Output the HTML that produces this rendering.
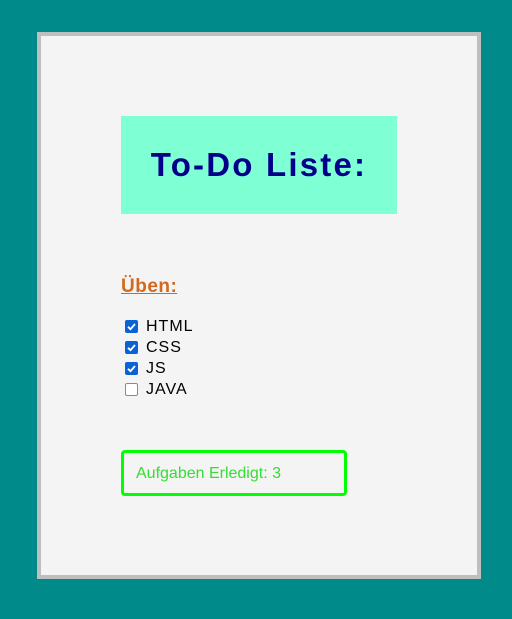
<!DOCTYPE html>
<html><head><meta charset="utf-8"><style>
html,body{margin:0;padding:0;}
body{width:512px;height:619px;background:#008b8a;position:relative;overflow:hidden;font-family:"Liberation Sans",sans-serif;}
.panel{position:absolute;left:37px;top:32px;width:436px;height:539px;background:#f4f4f4;border:4px solid #bfbfbf;}
.title{position:absolute;left:121px;top:116px;width:276px;height:98px;background:#7fffd4;color:#00008b;font-weight:bold;font-size:33px;line-height:98px;text-align:center;letter-spacing:2.2px;}
.ueben{position:absolute;left:121px;top:276px;color:#d2691e;font-size:19px;font-weight:bold;text-decoration:underline;letter-spacing:0.5px;}
.row{position:absolute;left:125px;height:14px;font-size:16px;color:#000;letter-spacing:1px;}
.cb{position:absolute;left:0;top:0;width:13px;height:13px;border-radius:2px;box-sizing:border-box;}
.on{background:#0b62d6;}
.off{border:1.5px solid #8a8a95;background:#fff;}
.row span{position:absolute;left:21px;top:-2px;white-space:nowrap;}
.done{position:absolute;left:121px;top:450px;height:40px;border:3px solid #00ff00;border-radius:4px;color:#33dd33;font-size:16px;line-height:42px;padding-left:12px;width:208px;}
</style></head><body>
<div class="panel"></div>
<div class="title">To-Do Liste:</div>
<div class="ueben">Üben:</div>
<div class="row" style="top:320px"><div class="cb on"><svg width="13" height="13"><path d="M3 6.8L5.5 9.2L10 4" stroke="#fff" stroke-width="1.8" fill="none"/></svg></div><span>HTML</span></div>
<div class="row" style="top:341px"><div class="cb on"><svg width="13" height="13"><path d="M3 6.8L5.5 9.2L10 4" stroke="#fff" stroke-width="1.8" fill="none"/></svg></div><span>CSS</span></div>
<div class="row" style="top:362px"><div class="cb on"><svg width="13" height="13"><path d="M3 6.8L5.5 9.2L10 4" stroke="#fff" stroke-width="1.8" fill="none"/></svg></div><span>JS</span></div>
<div class="row" style="top:383px"><div class="cb off"></div><span>JAVA</span></div>
<div class="done">Aufgaben Erledigt: 3</div>
</body></html>
